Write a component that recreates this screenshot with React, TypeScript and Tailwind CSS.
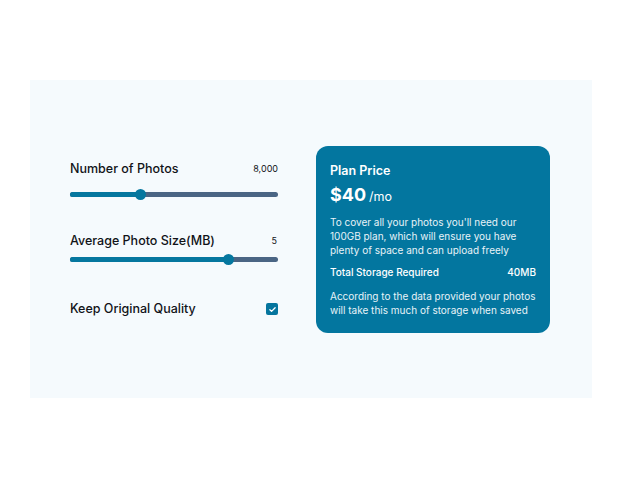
export default function App() {
  return (
    <div className="w-[621px] h-[479px] bg-white pt-[80px] font-['Inter',sans-serif]">
      <div className="ml-[30px] w-[562px] h-[318px] bg-[#f5fafd] flex items-center pl-[40px] gap-[38px]">
        {/* left controls */}
        <div className="w-[208px] flex flex-col text-[#111318]">
          <div className="h-4 flex items-center justify-between">
            <span className="text-[12.5px] font-medium">Number of Photos</span>
            <span className="text-[9px]">8,000</span>
          </div>
          <Slider pct={34} className="mt-[15px]" />
          <div className="h-4 mt-[36px] flex items-center justify-between">
            <span className="text-[12.5px] font-medium">Average Photo Size(MB)</span>
            <span className="text-[9px] pr-[1px]">5</span>
          </div>
          <Slider pct={76} className="mt-[8px]" />
          <div className="h-4 mt-[39px] flex items-center justify-between">
            <span className="text-[12.5px] font-medium">Keep Original Quality</span>
            <span className="w-[12px] h-[12px] rounded-[2px] bg-[#05759e] flex items-center justify-center">
              <svg width="9" height="9" viewBox="0 0 24 24" fill="none" stroke="white" strokeWidth="3.5" strokeLinecap="round" strokeLinejoin="round">
                <path d="M5 12.5l4.5 4.5L19 7.5" />
              </svg>
            </span>
          </div>
        </div>

        {/* price card */}
        <div className="w-[234px] rounded-[12px] bg-[#03769f] text-white px-[14px] pt-[18px] pb-4">
          <div className="h-4 flex items-center text-[12.5px] font-semibold">Plan Price</div>
          <div className="h-6 mt-[3px] flex items-baseline">
            <span className="text-[18px] font-bold leading-6">$40</span>
            <span className="text-[12.5px] ml-[3px]">/mo</span>
          </div>
          <p className="mt-[8px] text-[10px] leading-[14px] text-[#e8f3f8]">
            To cover all your photos you'll need our 100GB plan, which will ensure you have plenty of space and can upload freely
          </p>
          <div className="mt-[9px] h-[14px] flex items-center justify-between text-[10px] font-medium">
            <span>Total Storage Required</span>
            <span>40MB</span>
          </div>
          <p className="mt-[9px] text-[10px] leading-[14px] text-[#e8f3f8]">
            According to the data provided your photos will take this much of storage when saved
          </p>
        </div>
      </div>
    </div>
  )
}

function Slider({ pct, className }: { pct: number; className?: string }) {
  return (
    <div className={`relative h-[5px] rounded-full bg-[#4a6584] ${className ?? ''}`}>
      <div className="absolute left-0 top-0 h-full rounded-full bg-[#05779f]" style={{ width: `${pct}%` }} />
      <div
        className="absolute top-1/2 w-[11px] h-[11px] -ml-[5.5px] -mt-[5.5px] rounded-full bg-[#05779f]"
        style={{ left: `${pct}%` }}
      />
    </div>
  )
}
